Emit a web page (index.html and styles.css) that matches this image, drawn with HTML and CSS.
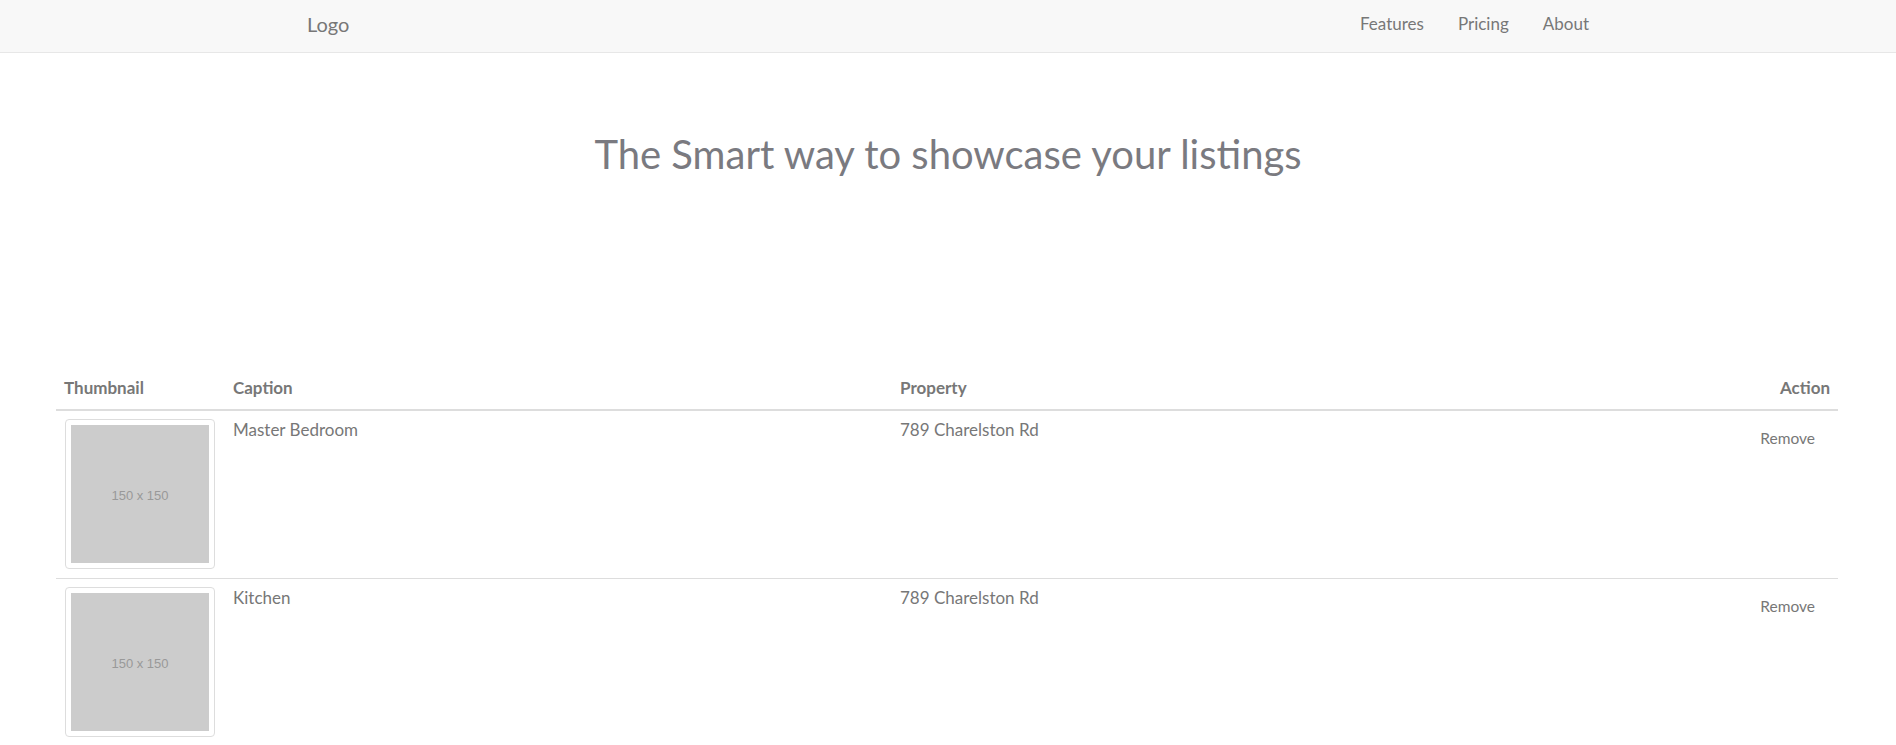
FILE: index.html
```html
<!DOCTYPE html>
<html lang="en">
<head>
<meta charset="utf-8">
<title>Listings</title>
<link rel="stylesheet" href="styles.css">
</head>
<body>
<nav class="navbar">
  <div class="nav-container">
    <a class="brand" href="#">Logo</a>
    <ul class="nav-links">
      <li><a href="#">Features</a></li>
      <li><a href="#">Pricing</a></li>
      <li><a href="#">About</a></li>
    </ul>
  </div>
</nav>
<header class="hero">
  <h1>The Smart way to showcase your listings</h1>
</header>
<main class="content">
  <table class="listings">
    <thead>
      <tr>
        <th class="col-thumb">Thumbnail</th>
        <th class="col-caption">Caption</th>
        <th class="col-property">Property</th>
        <th class="col-action">Action</th>
      </tr>
    </thead>
    <tbody>
      <tr>
        <td><div class="thumb"><div class="ph">150 x 150</div></div></td>
        <td>Master Bedroom</td>
        <td>789 Charelston Rd</td>
        <td class="col-action"><button class="btn-remove">Remove</button></td>
      </tr>
      <tr>
        <td><div class="thumb"><div class="ph">150 x 150</div></div></td>
        <td>Kitchen</td>
        <td>789 Charelston Rd</td>
        <td class="col-action"><button class="btn-remove">Remove</button></td>
      </tr>
    </tbody>
  </table>
</main>
</body>
</html>
```
FILE: styles.css
```css
* { box-sizing: border-box; }
html, body { margin: 0; padding: 0; }
body {
  font-family: Lato, "Open Sans", sans-serif;
  color: #777;
  background: #fff;
  font-size: 17px;
}
a { text-decoration: none; color: inherit; }

.navbar {
  background: #f8f8f8;
  border-bottom: 1px solid #e7e7e7;
  height: 53px;
}
.nav-container {
  width: 1316px;
  margin: 0 auto;
  display: flex;
  justify-content: space-between;
  align-items: center;
  height: 52px;
  padding-bottom: 5px;
}
.brand {
  font-size: 20px;
  padding: 0 17px;
  color: #777;
}
.nav-links {
  list-style: none;
  margin: 0;
  padding: 0;
  display: flex;
}
.nav-links a {
  display: block;
  padding: 0 17px;
  font-size: 17px;
  color: #777;
}

.hero {
  text-align: center;
  padding-top: 79px;
  height: 315px;
}
.hero h1 {
  margin: 0;
  font-size: 40px;
  font-weight: 400;
  color: #7a7a80;
  line-height: 1.1;
}

.content {
  padding: 0 58px 0 56px;
}
.listings {
  width: 100%;
  border-collapse: collapse;
  border-spacing: 0;
}
.listings th,
.listings td {
  padding: 8px;
  text-align: left;
  vertical-align: top;
}
.listings th {
  font-weight: 700;
  font-size: 17px;
  line-height: 24px;
  padding-bottom: 9px;
  border-bottom: 2px solid #ddd;
  vertical-align: bottom;
}
.listings td {
  border-top: 1px solid #ddd;
  font-size: 17px;
  line-height: 22px;
  padding-bottom: 9px;
}
.listings tbody tr:first-child td { border-top: 0; }
.col-thumb { width: 169px; }
.col-caption { width: 667px; }
.listings .col-action { text-align: right; width: 120px; }

.thumb {
  width: 150px;
  height: 150px;
  padding: 5px;
  border: 1px solid #ddd;
  border-radius: 4px;
  background: #fff;
  margin-left: 1px;
}
.ph {
  width: 100%;
  height: 100%;
  background: #ccc;
  color: #999;
  font-family: "Liberation Sans", Arial, sans-serif;
  font-size: 13px;
  padding-top: 3px;
  display: flex;
  align-items: center;
  justify-content: center;
}
.btn-remove {
  font-family: Lato, sans-serif;
  font-size: 15.5px;
  color: #777;
  background: none;
  border: 0;
  padding: 6px 12px;
  margin-right: 3px;
  margin-top: 2px;
  cursor: pointer;
  line-height: 22px;
}
```
